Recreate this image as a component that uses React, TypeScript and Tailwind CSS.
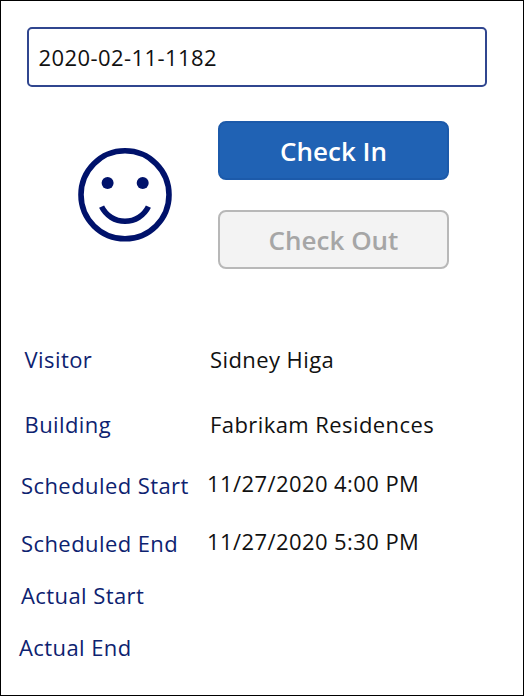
interface FieldProps {
  label: string;
  value?: string;
  row: string;
  labelBox: string;
  valueBox?: string;
}

function Field({ label, value, row, labelBox, valueBox = '' }: FieldProps) {
  return (
    <div className={`flex h-8 shrink-0 items-start text-[22px] leading-8 tracking-[0.42px] whitespace-nowrap ${row}`}>
      <div className={`shrink-0 text-[#0d2270] ${labelBox}`}>{label}</div>
      {value && <div className={`text-[#111111] ${valueBox}`}>{value}</div>}
    </div>
  );
}

export default function App() {
  return (
    <main className="flex h-[696px] w-[524px] flex-col overflow-hidden border border-black bg-white font-['Open_Sans',sans-serif]">
      <div className="mt-[26px] ml-[26px] flex h-[60px] w-[460px] shrink-0 items-center rounded-[5px] border-2 border-[#30468f] pl-[9.5px] text-[22px] tracking-[0.42px] text-[#111111]">
        2020-02-11-1182
      </div>
      <div className="mt-[34px] flex h-[148px] shrink-0">
        <svg className="mt-[26px] ml-[76px] h-[96px] w-[96px]" viewBox="0 0 96 96" fill="none">
          <circle cx="48" cy="47.8" r="44" stroke="#00126b" strokeWidth="5.6" />
          <circle cx="30.6" cy="36" r="6" fill="#00126b" />
          <circle cx="65.7" cy="36" r="6" fill="#00126b" />
          <path d="M24.6 59.6A26 26 0 0 0 71.4 59.6" stroke="#00126b" strokeWidth="5.6" />
        </svg>
        <div className="ml-[45px] flex w-[231px] flex-col gap-[30px]">
          <button className="h-[59px] rounded-[8px] border-2 border-[#1c5aaa] bg-[#2062b4] pt-px text-[26px] font-semibold text-white">
            Check In
          </button>
          <button className="h-[59px] rounded-[8px] border-2 border-[#b8b8b8] bg-[#f3f3f3] pt-px text-[26px] font-semibold text-[#a6a6a6]">
            Check Out
          </button>
        </div>
      </div>
      <Field label="Visitor" value="Sidney Higa" row="mt-[74px]" labelBox="w-[209px] pl-[23.5px]" />
      <Field label="Building" value="Fabrikam Residences" row="mt-[33px]" labelBox="w-[209px] pl-[23.5px]" />
      <Field label="Scheduled Start" value="11/27/2020 4:00 PM" row="mt-[29px]" labelBox="w-[206px] pl-[20px]" valueBox="-mt-[2px]" />
      <Field label="Scheduled End" value="11/27/2020 5:30 PM" row="mt-[26px]" labelBox="w-[206px] pl-[20px]" valueBox="-mt-[2px]" />
      <Field label="Actual Start" row="mt-[20px]" labelBox="pl-[20px]" />
      <Field label="Actual End" row="mt-[20px]" labelBox="pl-[18px]" />
    </main>
  );
}
